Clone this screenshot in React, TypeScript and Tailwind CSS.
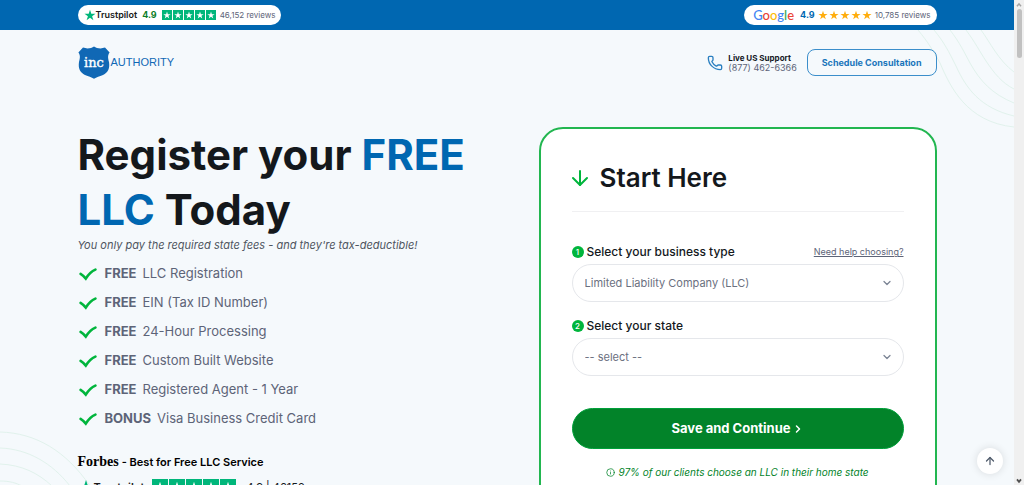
import React from "react";
import { ArrowDown, ArrowUp, ChevronDown, ChevronRight, Info, Phone } from "lucide-react";

const STAR = "M12 1.5l2.6 7.9H23l-6.8 4.9 2.6 8L12 17.4l-6.8 4.9 2.6-8L1 9.4h8.4z";

function Star({ className }: { className: string }) {
  return (
    <svg viewBox="0 0 24 24" className={className} fill="currentColor" aria-hidden="true">
      <path d={STAR} />
    </svg>
  );
}

function TrustStars({ large = false }: { large?: boolean }) {
  return (
    <span className="flex gap-px" role="img" aria-label="5 stars">
      {[0, 1, 2, 3, 4].map((i) => (
        <span
          key={i}
          className={
            large
              ? "flex size-4 items-center justify-center bg-[#00b67a] text-white"
              : "flex size-[10px] items-center justify-center bg-[#00b67a] text-white"
          }
        >
          <Star className={large ? "size-3" : "size-2"} />
        </span>
      ))}
    </span>
  );
}

function TopBar() {
  return (
    <div className="bg-[#0067b1] py-[5px]">
      <div className="mx-auto flex w-full max-w-[859px] items-center justify-between">
        <a href="#trustpilot" className="flex h-5 items-center rounded-full bg-white px-[6px]">
          <Star className="mb-px size-3 text-[#00b67a]" />
          <span className="text-[9px] font-semibold text-[#191919]">Trustpilot</span>
          <span className="mx-[5px] text-[9px] font-bold text-[#0a7d27]">4.9</span>
          <TrustStars />
          <span className="ml-1 text-[8px] text-[#5d6478]">46,152 reviews</span>
        </a>
        <a href="#google" className="flex h-5 items-center rounded-full bg-white pr-[6px] pl-[9px]">
          <span className="font-[Lato,sans-serif] text-[13px] leading-5 font-medium">
            <span className="text-[#4285f4]">G</span>
            <span className="text-[#ea4335]">o</span>
            <span className="text-[#fbbc05]">o</span>
            <span className="text-[#4285f4]">g</span>
            <span className="text-[#34a853]">l</span>
            <span className="text-[#ea4335]">e</span>
          </span>
          <span className="mr-[3px] ml-[6px] text-[9px] font-bold text-[#0067b1]">4.9</span>
          <span className="flex gap-px text-[#ffad0d]" role="img" aria-label="5 stars">
            {[0, 1, 2, 3, 4].map((i) => (
              <Star key={i} className="size-[10px]" />
            ))}
          </span>
          <span className="ml-[3px] text-[8px] text-[#5d6478]">10,785 reviews</span>
        </a>
      </div>
    </div>
  );
}

function Header() {
  return (
    <header className="mx-auto flex w-full max-w-[859px] items-center justify-between pt-4">
      <a href="#home" className="flex items-center gap-px" aria-label="inc Authority">
        <svg viewBox="0 0 32 33" className="h-[33px] w-8" aria-hidden="true">
          <path
            d="M16 0.4 C18.6 2.2 22.6 3.2 27 1.6 L31.6 6.4 C29.4 9.4 30 12 31 16 C32 22.4 30 26.6 25 29 C21.4 30.4 18.6 31 16 32.8 C13.4 31 10.6 30.4 7 29 C2 26.6 0 22.4 1 16 C2 12 2.6 9.4 0.4 6.4 L5 1.6 C9.4 3.2 13.4 2.2 16 0.4 Z"
            fill="#1068b5"
          />
          <text x="16" y="21" textAnchor="middle" fill="#ffffff" fontFamily="DejaVu Serif, serif" fontSize="13" stroke="#ffffff" strokeWidth="0.4">
            inc
          </text>
        </svg>
        <span className="font-['Liberation_Sans',sans-serif] text-[11px] text-[#1068b5]">AUTHORITY</span>
      </a>
      <div className="flex items-center">
        <Phone className="size-4 text-[#2a7fc0]" strokeWidth={2} aria-hidden="true" />
        <div className="mr-[10px] ml-[5px] leading-[10px]">
          <div className="text-[8px] font-bold text-[#14181f]">Live US Support</div>
          <a href="tel:8774626366" className="block text-[9px] text-[#5d6478]">
            (877) 462-6366
          </a>
        </div>
        <button className="h-[27px] rounded-lg border border-[#3b8ecb] px-[14px] text-[9px] font-bold text-[#1a75bb]">
          Schedule Consultation
        </button>
      </div>
    </header>
  );
}

const BENEFITS: [string, string][] = [
  ["FREE", "LLC Registration"],
  ["FREE", "EIN (Tax ID Number)"],
  ["FREE", "24-Hour Processing"],
  ["FREE", "Custom Built Website"],
  ["FREE", "Registered Agent - 1 Year"],
  ["BONUS", "Visa Business Credit Card"],
];

function Pitch() {
  return (
    <section className="min-w-0 flex-1">
      <h1 className="text-[42px] leading-[55px] font-bold text-[#14181c]">
        Register your <span className="text-[#0067b1]">FREE LLC</span> Today
      </h1>
      <p className="text-[11px] leading-4 text-[#4f555f] italic">
        You only pay the required state fees - and they're tax-deductible!
      </p>
      <ul className="mt-[6px]">
        {BENEFITS.map(([tag, text]) => (
          <li key={text} className="flex h-[29px] items-center text-[13px] text-[#5d6478]">
            <svg viewBox="0 0 18 14" className="mr-2 ml-px h-[14px] w-[18px]" aria-hidden="true">
              <path
                d="M1.6 6.8 C3.6 8 5 9.4 6.8 11.6 C9.6 7 12.4 4.2 16.4 2.6"
                fill="none"
                stroke="#00b53c"
                strokeWidth="2.6"
                strokeLinecap="round"
              />
            </svg>
            <strong className="mr-[6px] font-bold">{tag}</strong>
            {text}
          </li>
        ))}
      </ul>
      <div className="mt-[21px] flex items-baseline gap-[3px] text-[11px] leading-4 font-semibold text-black">
        <span className="font-['Liberation_Serif',serif] text-[14px] leading-4 font-bold">Forbes</span>
        <span>- Best for Free LLC Service</span>
      </div>
      <div className="mt-[9px] flex h-4 items-center whitespace-nowrap">
        <Star className="size-4 text-[#00b67a]" />
        <span className="text-[11px] font-semibold text-[#191919]">Trustpilot</span>
        <span className="ml-2">
          <TrustStars large />
        </span>
        <span className="ml-[10px] text-[11px] text-[#14181c]">4.9 | 46152</span>
      </div>
    </section>
  );
}

function Field({
  step,
  id,
  label,
  options,
  help,
}: {
  step: number;
  id: string;
  label: string;
  options: string[];
  help?: string;
}) {
  return (
    <div>
      <div className="flex h-[18px] items-center">
        <span className="flex size-3 items-center justify-center rounded-full bg-[#00b53c] text-[8px] leading-3 font-medium text-white">
          {step}
        </span>
        <label htmlFor={id} className="ml-[3px] text-[12px] font-medium text-[#14181c]">
          {label}
        </label>
        {help && (
          <a href="#help" className="ml-auto text-[9px] text-[#5d6478] underline">
            {help}
          </a>
        )}
      </div>
      <div className="relative mt-[3px]">
        <select
          id={id}
          className="h-[38px] w-full appearance-none rounded-full border border-[#e5e7eb] bg-white px-3 text-[11px] text-[#6b7080]"
        >
          {options.map((o) => (
            <option key={o}>{o}</option>
          ))}
        </select>
        <ChevronDown
          className="pointer-events-none absolute top-1/2 right-[11px] size-3 -translate-y-1/2 text-[#7b8494]"
          strokeWidth={2.5}
          aria-hidden="true"
        />
      </div>
    </div>
  );
}

function StartCard() {
  return (
    <section className="w-[398px] shrink-0 rounded-3xl border-2 border-[#22b650] bg-white px-[31px] pt-[29px] pb-10">
      <div className="flex items-center gap-2 border-b border-[#f0f0f2] pb-[13px]">
        <ArrowDown className="-ml-1 size-6 text-[#00b53c]" strokeWidth={2} aria-hidden="true" />
        <h2 className="text-[26px] leading-10 font-semibold text-[#14181c]">Start Here</h2>
      </div>
      <form className="mt-[31px]" onSubmit={(e) => e.preventDefault()}>
        <div className="flex flex-col gap-[15px]">
          <Field
            step={1}
            id="business-type"
            label="Select your business type"
            options={["Limited Liability Company (LLC)", "Corporation", "Nonprofit"]}
            help="Need help choosing?"
          />
          <Field step={2} id="state" label="Select your state" options={["-- select --", "California", "Nevada", "Texas"]} />
        </div>
        <button className="mt-8 flex h-[41px] w-full items-center justify-center gap-px rounded-full border border-[#00a03a] bg-[#028329] text-[13px] font-bold text-white">
          Save and Continue
          <ChevronRight className="size-3" strokeWidth={3} aria-hidden="true" />
        </button>
      </form>
      <p className="mt-[15px] flex h-4 items-center justify-center gap-[3px] text-[10px] text-[#028329] italic">
        <Info className="size-[9px]" aria-hidden="true" />
        97% of our clients choose an LLC in their home state
      </p>
    </section>
  );
}

function Scrollbar() {
  return (
    <div className="flex w-[10px] shrink-0 flex-col items-center justify-between bg-[#f0f0f0]" aria-hidden="true">
      <div className="flex flex-col items-center">
        <svg viewBox="0 0 10 9" className="h-[9px] w-[10px]">
          <path d="M3 6.2L5 3.8L7 6.2" fill="none" stroke="#a3a3a3" strokeWidth="1.5" />
        </svg>
        <div className="h-[49px] w-[5px] rounded-full bg-[#c1c1c1]" />
      </div>
      <svg viewBox="0 0 10 9" className="h-[9px] w-[10px]">
        <path d="M3 3.4L5 5.8L7 3.4" fill="none" stroke="#505050" strokeWidth="1.8" />
      </svg>
    </div>
  );
}

export default function App() {
  return (
    <div className="flex h-screen overflow-hidden bg-[#f5f9fc] font-[Inter,sans-serif]">
      <div className="relative min-w-0 flex-1 overflow-hidden">
        <svg
          viewBox="0 0 100 100"
          className="pointer-events-none absolute top-[30px] right-0 size-[100px]"
          fill="none"
          stroke="#e1f2ec"
          aria-hidden="true"
        >
          <path d="M4 0 C14 12 20 22 26 33 C36 56 52 92 100 97" />
          <path d="M20 0 C30 12 35 22 42 36 C52 58 66 78 100 86" />
          <path d="M36 0 C46 13 50 22 56 33 C66 51 78 64 100 73" />
          <path d="M52 0 C61 12 66 22 72 31 C80 43 88 53 100 59" />
          <path d="M67 0 C76 12 84 30 100 42" />
        </svg>
        <svg
          viewBox="0 0 100 60"
          className="pointer-events-none absolute bottom-0 left-0 h-[60px] w-[100px]"
          fill="none"
          stroke="#e1f2ec"
          aria-hidden="true"
        >
          <path d="M0 7 C36 8 66 26 90 61" />
          <path d="M0 23 C28 24 52 38 70 61" />
          <path d="M0 39 C22 40 38 48 52 61" />
          <path d="M0 56 C10 56 16 58 22 61" />
        </svg>
        <div className="relative">
          <TopBar />
          <Header />
          <main className="mx-auto mt-12 flex w-full max-w-[859px] gap-8">
            <Pitch />
            <StartCard />
          </main>
        </div>
        <button
          className="absolute right-[11px] bottom-[11px] flex size-[26px] items-center justify-center rounded-full bg-white text-[#4f5a6b] shadow-[0_0_8px_rgba(0,0,0,0.12)]"
          aria-label="Back to top"
        >
          <ArrowUp className="size-3" strokeWidth={2.5} aria-hidden="true" />
        </button>
      </div>
      <Scrollbar />
    </div>
  );
}
